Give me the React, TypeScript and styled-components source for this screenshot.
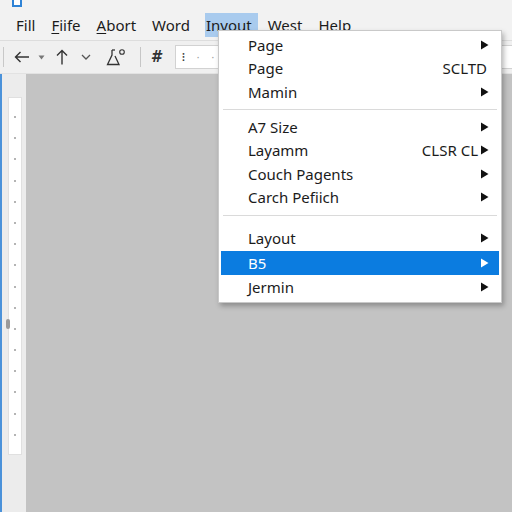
import React from 'react';
import styled, { createGlobalStyle } from 'styled-components';

const GlobalStyle = createGlobalStyle`
  html, body {
    margin: 0;
    padding: 0;
    background: #c3c3c3;
  }
  body {
    font-family: 'Noto Sans', 'Open Sans', sans-serif;
  }
`;

const Window = styled.div`
  position: relative;
  width: 512px;
  height: 512px;
  overflow: hidden;
  display: flex;
  flex-direction: column;
  background: #c3c3c3;
`;

const TitleStrip = styled.div`
  height: 10px;
  background: #f2f2f2;
  padding-left: 12px;
  display: flex;
  align-items: flex-start;
`;

const AppIcon = styled.div`
  width: 6px;
  height: 5px;
  border: 2px solid #2f83d6;
  border-top: none;
  background: #ffffff;
`;

const MenuBar = styled.div`
  height: 30px;
  background: #f2f2f2;
  display: flex;
  align-items: center;
  padding-left: 10px;
  gap: 4px;
  border-bottom: 1px solid #dddddd;
`;

const MenuTitle = styled.div<{ $open?: boolean }>`
  height: 24px;
  line-height: 24px;
  padding: ${(p) => (p.$open ? '0 6px 0 1px' : '0 6px')};
  margin-left: ${(p) => (p.$open ? '5px' : '0')};
  font-size: 15px;
  color: #1b1b1b;
  background: ${(p) => (p.$open ? '#a9cbee' : 'transparent')};

  u {
    text-decoration-thickness: 1px;
    text-underline-offset: 2px;
  }
`;

const Toolbar = styled.div`
  height: 32px;
  background: #f0f0f0;
  display: flex;
  align-items: center;
  padding-left: 3px;
  border-bottom: 1px solid #e2e2e2;
`;

const Grip = styled.div`
  width: 2px;
  height: 20px;
  border-left: 1px solid #c8c8c8;
  margin-right: 6px;
`;

const ToolButton = styled.div<{ $w: number }>`
  width: ${(p) => p.$w}px;
  height: 24px;
  display: flex;
  align-items: center;
  justify-content: center;
  color: #333333;
  flex-shrink: 0;
`;

const ToolSep = styled.div`
  width: 1px;
  height: 20px;
  background: #c6c6c6;
  margin: 0 4px 0 6px;
`;

const HashGlyph = styled.span`
  font-family: 'DejaVu Sans', sans-serif;
  font-size: 15px;
  font-style: italic;
  font-weight: 600;
  color: #333333;
  width: 22px;
  text-align: center;
`;

const FieldBox = styled.div`
  flex: 1;
  height: 22px;
  margin-left: 8px;
  background: #ffffff;
  border: 1px solid #d2d2d2;
  border-right: none;
  display: flex;
  align-items: center;
  padding-left: 6px;
  gap: 12px;
  font-size: 10px;
  color: #777777;
`;

const FieldDot = styled.span<{ $strong?: boolean }>`
  font-weight: ${(p) => (p.$strong ? 700 : 400)};
  color: ${(p) => (p.$strong ? '#333333' : '#999999')};
`;

const Workspace = styled.div`
  flex: 1;
  display: flex;
`;

const SidePanel = styled.div`
  width: 26px;
  background: #ececec;
  border-left: 2px solid #4b92da;
  padding-top: 23px;
  padding-left: 6px;
  box-sizing: border-box;
  flex-shrink: 0;
`;

const Ruler = styled.div`
  position: relative;
  width: 14px;
  height: 358px;
  background: #ffffff;
  border: 1px solid #e0e0e0;
  display: flex;
  flex-direction: column;
  align-items: center;
  padding-top: 18px;
  gap: 19.2px;
  box-sizing: border-box;
`;

const Tick = styled.div`
  width: 2px;
  height: 2px;
  background: #b4b4b4;
`;

const RulerKnob = styled.div`
  position: absolute;
  left: -3px;
  top: 221px;
  width: 4px;
  height: 10px;
  border-radius: 3px;
  background: #9a9a9a;
`;

const Canvas = styled.div`
  flex: 1;
  background: #c3c3c3;
`;

const Dropdown = styled.div`
  position: absolute;
  left: 218px;
  top: 30px;
  width: 284px;
  box-sizing: border-box;
  background: #ffffff;
  border: 1px solid #c9c9c9;
  padding: 2px 2px 2px 2px;
  box-shadow: 2px 3px 5px rgba(0, 0, 0, 0.28);
`;

const Item = styled.div<{ $active?: boolean; $h?: number }>`
  height: ${(p) => p.$h ?? 23.5}px;
  display: flex;
  align-items: center;
  padding: 0 10px 0 27px;
  font-size: 15px;
  color: ${(p) => (p.$active ? '#ffffff' : '#1b1b1b')};
  background: ${(p) => (p.$active ? '#0b7ce0' : 'transparent')};
`;

const Label = styled.span`
  flex: 1;
`;

const Shortcut = styled.span`
  font-size: 15px;
  margin-right: 2px;
`;

const Separator = styled.div<{ $below: number; $above: number }>`
  height: 1px;
  background: #dadada;
  margin: ${(p) => p.$above}px 2px ${(p) => p.$below}px 2px;
`;

const Arrow = ({ color }: { color: string }) => (
  <svg width="9" height="10" viewBox="0 0 9 10">
    <path d="M1 0.5 L8.5 5 L1 9.5 Z" fill={color} />
  </svg>
);

type Entry = { label: string; shortcut?: string; arrow?: boolean; active?: boolean };

const groups: { entries: Entry[]; height?: number }[] = [
  {
    entries: [
      { label: 'Page', arrow: true },
      { label: 'Page', shortcut: 'SCLTD' },
      { label: 'Mamin', arrow: true },
    ],
  },
  {
    entries: [
      { label: 'A7 Size', arrow: true },
      { label: 'Layamm', shortcut: 'CLSR CL', arrow: true },
      { label: 'Couch Pagents', arrow: true },
      { label: 'Carch Pefiich', arrow: true },
    ],
  },
  {
    height: 24.5,
    entries: [
      { label: 'Layout', arrow: true },
      { label: 'B5', arrow: true, active: true },
      { label: 'Jermin', arrow: true },
    ],
  },
];

const separators = [
  { above: 5.5, below: 5 },
  { above: 6, below: 10 },
];

const App: React.FC = () => {
  return (
    <>
      <GlobalStyle />
      <Window>
        <TitleStrip>
          <AppIcon />
        </TitleStrip>

        <MenuBar>
          <MenuTitle>Fill</MenuTitle>
          <MenuTitle>
            <u>F</u>iife
          </MenuTitle>
          <MenuTitle>
            <u>A</u>bort
          </MenuTitle>
          <MenuTitle>Word</MenuTitle>
          <MenuTitle $open>Inyout</MenuTitle>
          <MenuTitle>West</MenuTitle>
          <MenuTitle>Help</MenuTitle>
        </MenuBar>

        <Toolbar>
          <Grip />
          <ToolButton $w={20}>
            <svg width="16" height="12" viewBox="0 0 16 12">
              <path d="M15 6 H1.5 M6.5 1 L1.5 6 L6.5 11" fill="none" stroke="#333" strokeWidth="1.4" />
            </svg>
          </ToolButton>
          <ToolButton $w={18}>
            <svg width="7" height="5" viewBox="0 0 7 5">
              <path d="M0.5 0.5 H6.5 L3.5 4.5 Z" fill="#777" />
            </svg>
          </ToolButton>
          <ToolButton $w={24}>
            <svg width="12" height="16" viewBox="0 0 12 16">
              <path d="M6 15.5 V1.5 M1 6.5 L6 1.5 L11 6.5" fill="none" stroke="#333" strokeWidth="1.4" />
            </svg>
          </ToolButton>
          <ToolButton $w={24}>
            <svg width="10" height="6" viewBox="0 0 10 6">
              <path d="M1 1 L5 5 L9 1" fill="none" stroke="#555" strokeWidth="1.3" />
            </svg>
          </ToolButton>
          <ToolButton $w={36}>
            <svg width="20" height="18" viewBox="0 0 20 18">
              <path d="M6 2 V7 L1.5 16.5 H13 L9 8" fill="none" stroke="#333" strokeWidth="1.3" />
              <path d="M6 2 H9" fill="none" stroke="#333" strokeWidth="1.3" />
              <circle cx="16" cy="4" r="2.3" fill="none" stroke="#333" strokeWidth="1.1" />
            </svg>
          </ToolButton>
          <ToolSep />
          <HashGlyph>#</HashGlyph>
          <FieldBox>
            <FieldDot $strong>⁝</FieldDot>
            <FieldDot>·</FieldDot>
            <FieldDot>·</FieldDot>
            <FieldDot>·</FieldDot>
          </FieldBox>
        </Toolbar>

        <Workspace>
          <SidePanel>
            <Ruler>
              {Array.from({ length: 16 }).map((_, i) => (
                <Tick key={i} />
              ))}
              <RulerKnob />
            </Ruler>
          </SidePanel>
          <Canvas />
        </Workspace>

        <Dropdown>
          {groups.map((g, gi) => (
            <React.Fragment key={gi}>
              {gi > 0 && (
                <Separator $above={separators[gi - 1].above} $below={separators[gi - 1].below} />
              )}
              {g.entries.map((e, ei) => (
                <Item key={ei} $active={e.active} $h={g.height}>
                  <Label>{e.label}</Label>
                  {e.shortcut && <Shortcut>{e.shortcut}</Shortcut>}
                  {e.arrow && <Arrow color={e.active ? '#ffffff' : '#111111'} />}
                </Item>
              ))}
            </React.Fragment>
          ))}
        </Dropdown>
      </Window>
    </>
  );
};

export default App;
